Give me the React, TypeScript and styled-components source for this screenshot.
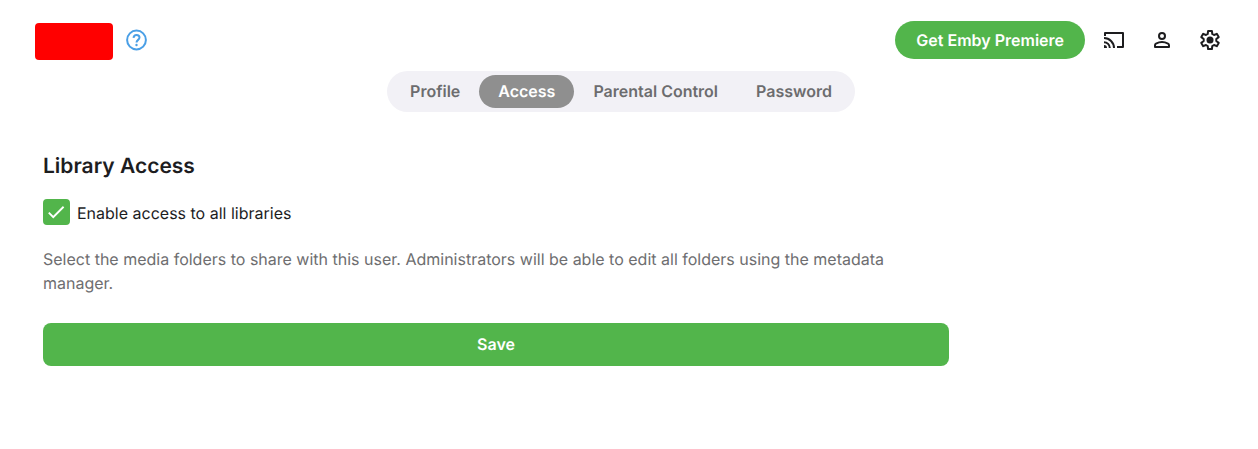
import React, { useState } from 'react';
import styled, { createGlobalStyle } from 'styled-components';

const GlobalStyle = createGlobalStyle`
  *, *::before, *::after { box-sizing: border-box; }
  body {
    margin: 0;
    background: #fff;
    color: #1d1d1f;
    font-family: Inter, sans-serif;
    font-size: 16px;
    line-height: 24px;
    text-rendering: geometricPrecision;
  }
  button, input {
    font: inherit;
    text-rendering: inherit;
  }
`;

const Header = styled.header`
  display: flex;
  align-items: center;
  justify-content: space-between;
  height: 71px;
  padding: 9px 28px 0 35px;
`;

const Brand = styled.div`
  display: flex;
  align-items: center;
  gap: 12px;
`;

const UserName = styled.div`
  width: 78px;
  height: 37px;
  margin-top: 2px;
  border-radius: 4px;
  background: #ff0000;
`;

const HelpLink = styled.a`
  display: flex;
  color: #4a9fe6;
`;

const Actions = styled.div`
  display: flex;
  align-items: center;
  gap: 8px;
`;

const PremiereButton = styled.button`
  height: 38px;
  padding: 0 21px;
  margin-right: 1px;
  border: 0;
  border-radius: 19px;
  background: #52b54b;
  color: #fff;
  font-weight: 600;
`;

const IconButton = styled.button`
  display: flex;
  align-items: center;
  justify-content: center;
  width: 40px;
  height: 40px;
  padding: 0;
  border: 0;
  background: none;
  color: #1d1d1f;
`;

const TabBar = styled.div`
  display: flex;
  justify-content: center;
  padding-right: 16px;
`;

const Tabs = styled.nav`
  display: flex;
  padding: 4px;
  border-radius: 21px;
  background: #f2f1f6;
`;

const Tab = styled.button<{ $active: boolean }>`
  height: 33px;
  padding: 0 19px 1px;
  border: 0;
  border-radius: 17px;
  background: ${(p) => (p.$active ? '#8f8f8f' : 'transparent')};
  color: ${(p) => (p.$active ? '#fff' : '#6c6c6e')};
  font-weight: 600;
`;

const Form = styled.form`
  max-width: 949px;
  padding: 40px 0 0 43px;
`;

const Title = styled.h2`
  margin: 0;
  font-size: 21px;
  line-height: 30px;
  font-weight: 600;
`;

const CheckLabel = styled.label`
  display: flex;
  align-items: center;
  gap: 7px;
  margin-top: 17px;
`;

const CheckBox = styled.span`
  display: grid;
  width: 27px;
  height: 27px;
  > * { grid-area: 1 / 1; }
`;

const CheckInput = styled.input`
  appearance: none;
  width: 27px;
  height: 26px;
  margin: 0;
  border: 2px solid #52b54b;
  border-radius: 4px;
  &:checked { background: #52b54b; }
  &:not(:checked) + svg { visibility: hidden; }
`;

const CheckMark = styled.svg`
  margin: 2px 0 0 2px;
  pointer-events: none;
`;

const Description = styled.p`
  max-width: 880px;
  margin: 21px 0 28px;
  color: #6e6e70;
`;

const SaveButton = styled.button`
  width: 100%;
  height: 43px;
  padding: 0 0 1px;
  border: 0;
  border-radius: 8px;
  background: #52b54b;
  color: #fff;
  font-weight: 600;
`;

const StrokeIcon = styled.svg.attrs({ width: 24, height: 24, viewBox: '0 0 24 24', 'aria-hidden': true })`
  fill: none;
  stroke: currentColor;
  stroke-width: 2;
  stroke-linejoin: round;
`;

const HelpIcon = () => (
  <StrokeIcon>
    <circle cx="11.5" cy="12" r="9.4" />
    <path d="M8.5 9.8C8.7 7.8 9.9 6.9 11.5 6.9s3 1 3 2.7c0 2.2-3 2.4-3 4.9" />
    <circle cx="11.5" cy="17" r="1.2" fill="currentColor" stroke="none" />
  </StrokeIcon>
);

const CastIcon = () => (
  <StrokeIcon>
    <path d="M3 8V5h18v14h-6M2 10a10 10 0 0 1 10 10M2 14.200a5.800 5.800 0 0 1 5.800 5.800" />
    <path d="M2 17A3 3 0 0 1 5 20H2z" fill="currentColor" stroke="none" />
  </StrokeIcon>
);

const PersonIcon = () => (
  <StrokeIcon>
    <circle cx="12" cy="8" r="3" />
    <path d="M5 19v-1.8c0-.7.4-1.3 1-1.6 3.8-1.9 8.2-1.9 12 0 .6.3 1 .9 1 1.6V19z" />
  </StrokeIcon>
);

const GearIcon = () => (
  <StrokeIcon>
    <path d="M10.1 3h3.8l.4 3 1.7 1 2.8-1.2 1.9 3.3L18.3 11v2l2.4 1.9-1.9 3.3L16 17l-1.7 1-.4 3h-3.8l-.4-3L8 17l-2.8 1.2-1.9-3.3L5.7 13v-2L3.3 9.1l1.9-3.3L8 7l1.7-1z" />
    <circle cx="12" cy="12" r="3.5" fill="currentColor" stroke="none" />
  </StrokeIcon>
);

const tabs = ['Profile', 'Access', 'Parental Control', 'Password'];

export default function App() {
  const [active, setActive] = useState('Access');
  const [allLibraries, setAllLibraries] = useState(true);
  return (
    <>
      <GlobalStyle />
      <Header>
        <Brand>
          <UserName />
          <HelpLink href="#help" aria-label="Help"><HelpIcon /></HelpLink>
        </Brand>
        <Actions>
          <PremiereButton type="button">Get Emby Premiere</PremiereButton>
          <IconButton type="button" aria-label="Cast"><CastIcon /></IconButton>
          <IconButton type="button" aria-label="User"><PersonIcon /></IconButton>
          <IconButton type="button" aria-label="Settings"><GearIcon /></IconButton>
        </Actions>
      </Header>
      <TabBar>
        <Tabs>
          {tabs.map((t) => (
            <Tab key={t} type="button" $active={t === active} onClick={() => setActive(t)}>{t}</Tab>
          ))}
        </Tabs>
      </TabBar>
      <main>
        <Form onSubmit={(e) => e.preventDefault()}>
          <Title>Library Access</Title>
          <CheckLabel>
            <CheckBox>
              <CheckInput type="checkbox" checked={allLibraries} onChange={(e) => setAllLibraries(e.target.checked)} />
              <CheckMark width="22" height="22" viewBox="0 0 24 24" fill="#fff" aria-hidden="true">
                <path d="M9 16.17L4.83 12l-1.42 1.41L9 19 21 7l-1.41-1.41z" />
              </CheckMark>
            </CheckBox>
            Enable access to all libraries
          </CheckLabel>
          <Description>
            Select the media folders to share with this user. Administrators will be able to edit all folders using the metadata manager.
          </Description>
          <SaveButton type="submit">Save</SaveButton>
        </Form>
      </main>
    </>
  );
}
